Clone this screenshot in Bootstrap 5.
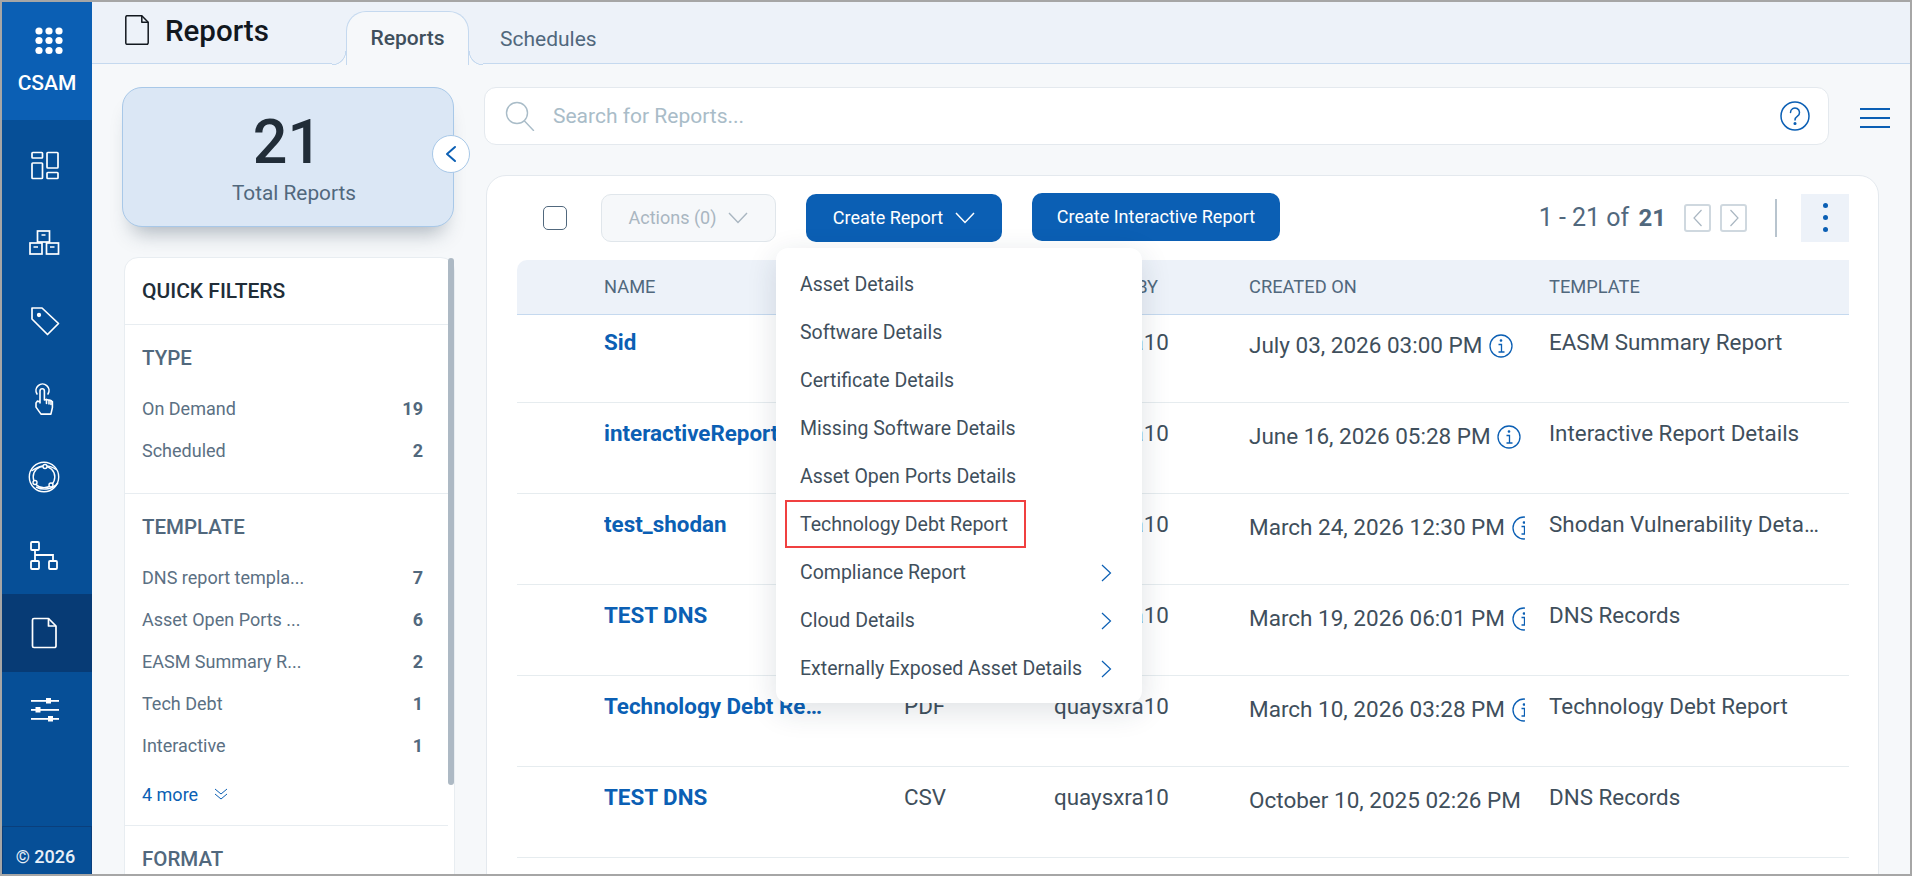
<!DOCTYPE html>
<html lang="en">
<head>
  <meta charset="UTF-8">
  <title>Reports</title>
  <link href="https://cdn.jsdelivr.net/npm/bootstrap@5.3.3/dist/css/bootstrap.min.css" rel="stylesheet">
  <style>
    html, body { height: 876px; overflow: hidden; }
    body { font-family: Roboto, "Liberation Sans", sans-serif; background: #f6f8fa; color: #3f4f5c; }
    .app-frame { height: 876px; border: 2px solid #a6a6a6; overflow: hidden; }
    .work-area { min-width: 0; }
    .work-body { min-height: 0; }

    .side-rail { width: 90px; flex: none; background: #064f97; }
    .rail-logo { height: 118px; background: #0b5fb4; color: #fff; font-size: 21px; font-weight: 500; padding-top: 66px; text-align: center; position: relative; }
    .rail-logo svg { position: absolute; left: 0; top: 0; }
    .rail-list { padding-top: 6px; }
    .rail-item { height: 78px; }
    .rail-item svg { display: block; }
    .rail-item.is-active { background: #073b75; }
    .rail-foot { height: 48px; border: 1px solid #0a3f7c; border-bottom: 0; color: #e8f0f8; font-size: 18px; font-weight: 500; text-align: center; line-height: 24px; padding: 18px 3px 0 0; }

    .top-bar { height: 62px; background: #edf2f9; border-bottom: 1px solid #c5d9ef; flex: none; padding-left: 33px; }
    .page-title { font-size: 29.5px; font-weight: 500; color: #12181f; line-height: 1; margin: 0 0 0 16px; }
    .title-head { height: 46px; width: 221px; margin-top: 7px; }
    .title-head svg { position: relative; top: -2px; }
    .tab-on { width: 123px; height: 54px; margin-top: 9px; background: #f6f8fa; border: 1px solid #c5d9ef; border-bottom: 0; border-radius: 20px 20px 0 0; font-size: 21px; font-weight: 500; color: #3f4f5c; position: relative; text-align: center; line-height: 52px; }
    .tab-on::before, .tab-on::after { content: ""; position: absolute; bottom: 0; width: 14px; height: 14px; }
    .tab-on::before { left: -15px; background: radial-gradient(circle at 0 0, #edf2f9 13px, #c5d9ef 13.5px, #c5d9ef 14px, #f6f8fa 14.5px); }
    .tab-on::after { right: -15px; background: radial-gradient(circle at 100% 0, #edf2f9 13px, #c5d9ef 13.5px, #c5d9ef 14px, #f6f8fa 14.5px); }
    .tab-off { font-size: 21px; color: #51687d; margin-left: 31px; padding-top: 18px; line-height: 38px; }

    .left-col { width: 392px; flex: none; padding: 23px 0 0 30px; }
    .stat-box { width: 332px; height: 140px; background: #dbe7f5; border: 1px solid #a8c8e8; border-radius: 20px; box-shadow: 0 16px 20px -10px rgba(40, 60, 80, .35); text-align: center; position: relative; padding-top: 19px; }
    .stat-num { font-size: 61px; font-weight: 500; color: #212d38; line-height: 70px; margin-left: -1px; }
    .stat-label { font-size: 20.800px; color: #51687d; line-height: 24px; margin-top: 4px; margin-left: 12px; }
    .stat-toggle { position: absolute; right: -17px; top: 47px; width: 38px; height: 38px; border-radius: 50%; background: #fff; border: 1px solid #a8c8e8; display: flex; align-items: center; justify-content: center; }

    .filter-panel { width: 331px; margin: 30px 0 0 2px; background: #fff; border: 1px solid #e8edf1; border-radius: 14px 14px 0 0; height: 640px; position: relative; padding-right: 6px; }
    .panel-scroll { position: absolute; right: 0; top: 0; width: 6px; height: 527px; background: #adb9c4; border-radius: 3px; }
    .panel-head { height: 67px; padding-left: 17px; line-height: 66px; font-size: 21px; font-weight: 500; color: #212d38; border-bottom: 1px solid #e8edf1; }
    .filter-group { padding: 21px 25px 0 17px; border-bottom: 1px solid #e8edf1; }
    .group-type { height: 169px; }
    .group-template { height: 332px; }
    .group-title { font-size: 20.500px; font-weight: 500; color: #51687d; line-height: 24px; margin-bottom: 17px; }
    .filter-line { height: 42px; font-size: 18px; color: #5b7083; }
    .filter-line b { font-weight: 700; color: #51687d; }
    .more-link { color: #0b5fb4; font-size: 18px; height: 42px; margin-top: 7px; }

    .right-col { flex: 1; padding-top: 23px; min-width: 0; }
    .search-bar { width: 1345px; height: 58px; background: #fff; border: 1px solid #e4e9ee; border-radius: 12px; padding: 0 18px 0 20px; }
    .search-hint { font-size: 21px; color: #a9bcc8; margin: 2px 0 0 17px; }
    .burger-btn { width: 30px; margin: 3px 0 0 31px; }
    .burger-btn span { display: block; height: 2px; background: #0b5fb4; margin-bottom: 7px; }

    .main-card { width: 1393px; height: 720px; margin: 30px 0 0 2px; background: #fff; border: 1px solid #e4e9ee; border-radius: 20px 20px 0 0; padding: 17px 29px 0 30px; }
    .tool-row { height: 49px; margin-bottom: 18px; }
    .tick-box { width: 24px; height: 24px; border: 1.5px solid #51687d; border-radius: 5px; margin-left: 26px; background: #fff; }
    .act-btn { width: 175px; height: 48px; margin-left: 34px; background: #f6f8fa; border: 1px solid #e0e6eb; border-radius: 10px; color: #a9b6c1; font-size: 18px; gap: 12px; }
    .blue-btn { height: 48px; background: #0b5fb4; border: 0; border-radius: 10px; color: #fff; font-size: 18px; font-weight: 400; }
    .blue-btn:hover { background: #0b5fb4; color: #fff; }
    .create-wrap { margin-left: 30px; position: relative; }
    .create-btn { width: 196px; gap: 12px; }
    .inter-btn { width: 248px; margin-left: 30px; position: relative; top: -1px; padding: 0; }
    .page-count { font-size: 25px; color: #51687d; margin-left: auto; }
    .page-count b { font-weight: 700; margin-left: 3px; font-size: 24px; }
    .page-arrow { width: 27px; height: 28px; border: 2px solid #cfd8df; border-radius: 3px; background: #fff; margin-left: 9px; }
    .page-arrow.first-arrow { margin-left: 18px; }
    .tool-split { width: 2px; height: 38px; background: #b8c4ce; margin: 0 24px 0 28px; }
    .kebab-box { width: 48px; height: 48px; background: #edf2f9; gap: 7px; }
    .kebab-box i { display: block; width: 5px; height: 5px; border-radius: 50%; background: #0b5fb4; }

    .create-menu { left: -30px; top: 54px; width: 366px; height: 455px; padding: 13px 0 0; border: 0; border-radius: 12px; box-shadow: 0 8px 30px rgba(30, 50, 70, .14); z-index: 5; }
    .create-menu .dropdown-item { height: 48px; line-height: 48px; padding: 0 24px; font-size: 19.500px; color: #3f4f5c; position: relative; display: flex; align-items: center; justify-content: space-between; }
    .mark-red::after { content: ""; position: absolute; left: 9px; top: -1px; width: 241px; height: 48px; border: 2px solid #f04040; }
    .item-go { margin-right: 6px; }

    .report-grid { table-layout: fixed; width: 1332px; margin: 0; --bs-border-color: #e6ecef; }
    .report-grid thead th { height: 54px; background: #edf2f9; border-bottom: 1px solid #c5d9ef; font-size: 18.300px; font-weight: 400; color: #51687d; padding: 0; vertical-align: middle; }
    .report-grid thead th:first-child { border-top-left-radius: 10px; }
    .report-grid td { height: 91px; padding: 18px 0 0; font-size: 22.400px; color: #3f4f5c; vertical-align: top; line-height: 24px; }
    .report-grid tbody tr:first-child td { height: 88px; padding-top: 15px; }
    .col-check { width: 87px; }
    .col-name { width: 300px; }
    .col-format { width: 150px; }
    .col-by { width: 195px; }
    .col-on { width: 300px; }
    .col-tmpl { width: 300px; }
    .report-grid .name-cell { color: #0b5fb4; font-weight: 700; width: 222px; }
    .date-cell { width: 276px; overflow: hidden; white-space: nowrap; padding-top: 3px; height: 30px; font-size: 22.500px; }
    .date-cell svg { vertical-align: -5px; margin-left: 1px; }
    .tmpl-cell { width: 272px; }
  </style>
</head>
<body>

<div class="app-frame d-flex">
  <nav class="side-rail d-flex flex-column">
    <div class="rail-logo">
      <svg width="90" height="60" viewBox="2 2 90 60" fill="#fff">
        <circle cx="39" cy="31" r="3.6"/><circle cx="49" cy="31" r="3.6"/><circle cx="59" cy="31" r="3.6"/>
        <circle cx="39" cy="40.5" r="3.6"/><circle cx="49" cy="40.5" r="3.6"/><circle cx="59" cy="40.5" r="3.6"/>
        <circle cx="39" cy="50.5" r="3.6"/><circle cx="49" cy="50.5" r="3.6"/><circle cx="59" cy="50.5" r="3.6"/>
      </svg>
      CSAM
    </div>
    <div class="rail-list flex-grow-1">
      <div class="rail-item">
        <svg width="90" height="78" viewBox="2 126 90 78" fill="none" stroke="#fff" stroke-width="1.7">
          <rect x="32" y="152.5" width="10.5" height="5.5" rx=".8"/><rect x="32" y="163" width="10.5" height="15.5" rx=".8"/>
          <rect x="47" y="152.5" width="11" height="15.5" rx=".8"/><rect x="47" y="172.5" width="11" height="6" rx=".8"/>
        </svg>
      </div>
      <div class="rail-item">
        <svg width="90" height="78" viewBox="2 204 90 78" fill="none" stroke="#fff" stroke-width="1.7">
          <rect x="37.5" y="231" width="12" height="11"/><rect x="30" y="243" width="12" height="11"/><rect x="46.5" y="243" width="12" height="11"/>
          <path d="M41.5 235h4M33.500 247h4.500M50 247h4.500"/>
        </svg>
      </div>
      <div class="rail-item">
        <svg width="90" height="78" viewBox="2 282 90 78" fill="none" stroke="#fff" stroke-width="1.7" stroke-linejoin="round">
          <path d="M32 308h10l16.500 15.500-11 11L32 319z"/><circle cx="39" cy="315" r="1.300" fill="#fff"/>
        </svg>
      </div>
      <div class="rail-item">
        <svg width="90" height="78" viewBox="2 360 90 78" fill="none" stroke="#fff" stroke-width="1.600" stroke-linecap="round" stroke-linejoin="round">
          <path d="M37 394a6.500 6.500 0 1 1 11 0"/>
          <path d="M40 403v-12a2.200 2.200 0 0 1 4.400 0v9l2 -.6 2 .6 2 .4 2 1.200v6l-1.500 6.500H41l-5-7v-4l1.500-2 2.500 1"/>
          <path d="M46.500 399.500v4M49 400v4M51 400.500v4"/>
        </svg>
      </div>
      <div class="rail-item">
        <svg width="90" height="78" viewBox="2 438 90 78" fill="none" stroke="#fff" stroke-width="1.400">
          <circle cx="44" cy="477" r="14.700"/>
          <circle cx="44" cy="477" r="10.800"/>
          <path d="M31.500 471c7-5.500 17-7.500 24.500-1.500M58 483c-5 6-14 8-22 4"/>
          <circle cx="45" cy="466.500" r="2" fill="#064f97"/><circle cx="35" cy="482.500" r="2" fill="#064f97"/><circle cx="51" cy="485" r="2" fill="#064f97"/>
        </svg>
      </div>
      <div class="rail-item">
        <svg width="90" height="78" viewBox="2 516 90 78" fill="none" stroke="#fff" stroke-width="1.800">
          <rect x="31" y="542" width="8" height="8" rx="1"/><rect x="31" y="561" width="8" height="8" rx="1"/><rect x="49" y="561" width="8" height="8" rx="1"/>
          <path d="M35 550v11M35 555h18v6"/>
        </svg>
      </div>
      <div class="rail-item is-active">
        <svg width="90" height="78" viewBox="2 594 90 78" fill="none" stroke="#fff" stroke-width="1.700" stroke-linejoin="round">
          <path d="M34 618.500h14.500l7.500 7.500v20a1.500 1.500 0 0 1-1.500 1.500H34a1.500 1.500 0 0 1-1.500-1.500v-26a1.500 1.500 0 0 1 1.500-1.500z"/>
          <path d="M48.500 618.500v7.500h7.500"/>
        </svg>
      </div>
      <div class="rail-item">
        <svg width="90" height="78" viewBox="2 672 90 78" fill="#fff">
          <rect x="31" y="700" width="28" height="1.800"/><rect x="31" y="709" width="28" height="1.800"/><rect x="31" y="718" width="28" height="1.800"/>
          <rect x="46" y="698" width="5" height="5.500"/><rect x="35.500" y="707" width="5" height="5.500"/><rect x="48" y="716" width="5" height="5.500"/>
        </svg>
      </div>
    </div>
    <div class="rail-foot">© 2026</div>
  </nav>

  <div class="work-area flex-grow-1 d-flex flex-column">
    <header class="top-bar d-flex">
      <div class="title-head d-flex align-items-center">
        <svg width="24" height="30" viewBox="0 0 24 30" fill="none" stroke="#12181f" stroke-width="1.500" stroke-linejoin="round">
          <path d="M1.800 .8h15l6.400 6.400v20.600a1.500 1.500 0 0 1-1.500 1.500H1.800a1.500 1.500 0 0 1-1-1.500V2.300a1.500 1.500 0 0 1 1-1.500z"/>
          <path d="M16.800 .8v6.400h6.400"/>
        </svg>
        <h1 class="page-title">Reports</h1>
      </div>
      <div class="tab-on">Reports</div>
      <div class="tab-off">Schedules</div>
    </header>

    <div class="work-body d-flex flex-grow-1">
      <aside class="left-col">
        <div class="stat-box">
          <div class="stat-num">21</div>
          <div class="stat-label">Total Reports</div>
          <div class="stat-toggle">
            <svg width="12" height="18" viewBox="0 0 12 18" fill="none" stroke="#0b5fb4" stroke-width="2" stroke-linecap="round" stroke-linejoin="round"><path d="M10 2 2 9l8 7"/></svg>
          </div>
        </div>

        <div class="filter-panel">
          <div class="panel-scroll"></div>
          <div class="panel-head">QUICK FILTERS</div>
          <div class="filter-group group-type">
            <div class="group-title">TYPE</div>
            <div class="filter-line d-flex justify-content-between align-items-center"><span>On Demand</span><b>19</b></div>
            <div class="filter-line d-flex justify-content-between align-items-center"><span>Scheduled</span><b>2</b></div>
          </div>
          <div class="filter-group group-template">
            <div class="group-title">TEMPLATE</div>
            <div class="filter-line d-flex justify-content-between align-items-center"><span>DNS report templa...</span><b>7</b></div>
            <div class="filter-line d-flex justify-content-between align-items-center"><span>Asset Open Ports ...</span><b>6</b></div>
            <div class="filter-line d-flex justify-content-between align-items-center"><span>EASM Summary R...</span><b>2</b></div>
            <div class="filter-line d-flex justify-content-between align-items-center"><span>Tech Debt</span><b>1</b></div>
            <div class="filter-line d-flex justify-content-between align-items-center"><span>Interactive</span><b>1</b></div>
            <div class="more-link d-flex align-items-center gap-3">
              <span>4 more</span>
              <svg width="14" height="12" viewBox="0 0 14 12" fill="none" stroke="#0b5fb4" stroke-width="1"><path d="m1 1 6 5 6-5M1 6l6 5 6-5"/></svg>
            </div>
          </div>
          <div class="filter-group border-0">
            <div class="group-title">FORMAT</div>
          </div>
        </div>
      </aside>

      <main class="right-col">
        <div class="d-flex align-items-center">
          <div class="search-bar d-flex align-items-center">
            <svg width="31" height="30" viewBox="0 0 31 30" fill="none" stroke="#a9bcc8" stroke-width="1.400" stroke-linecap="round"><circle cx="12" cy="12" r="10.500"/><path d="m19.500 20 9 9.500"/></svg>
            <span class="search-hint">Search for Reports...</span>
            <svg class="ms-auto" width="30" height="30" viewBox="0 0 30 30" fill="none" stroke="#0b5fb4" stroke-width="1.500" stroke-linecap="round">
              <circle cx="15" cy="15" r="14"/><path d="M10.500 11.500a4.500 4.500 0 1 1 7 3.700c-1.600 1.100-2.500 2-2.500 3.800"/><circle cx="15" cy="22.500" r=".8" fill="#0b5fb4"/>
            </svg>
          </div>
          <div class="burger-btn"><span></span><span></span><span class="mb-0"></span></div>
        </div>

        <section class="main-card">
          <div class="tool-row d-flex align-items-center">
            <div class="tick-box"></div>
            <button type="button" class="btn act-btn d-flex align-items-center justify-content-center">
              Actions (0)
              <svg width="20" height="12" viewBox="0 0 20 12" fill="none" stroke="#a9b6c1" stroke-width="1.400"><path d="m1 1 9 9.500L19 1"/></svg>
            </button>
            <div class="create-wrap">
              <button type="button" class="btn blue-btn create-btn d-flex align-items-center justify-content-center">
                Create Report
                <svg width="20" height="12" viewBox="0 0 20 12" fill="none" stroke="#fff" stroke-width="1.500"><path d="m1 1 9 9.500L19 1"/></svg>
              </button>
              <div class="dropdown-menu show create-menu">
                <a class="dropdown-item" href="#">Asset Details</a>
                <a class="dropdown-item" href="#">Software Details</a>
                <a class="dropdown-item" href="#">Certificate Details</a>
                <a class="dropdown-item" href="#">Missing Software Details</a>
                <a class="dropdown-item" href="#">Asset Open Ports Details</a>
                <a class="dropdown-item mark-red" href="#">Technology Debt Report</a>
                <a class="dropdown-item" href="#">Compliance Report
                  <svg class="item-go" width="11" height="18" viewBox="0 0 11 18" fill="none" stroke="#0b5fb4" stroke-width="1.200"><path d="m1 1 8.500 8L1 17"/></svg></a>
                <a class="dropdown-item" href="#">Cloud Details
                  <svg class="item-go" width="11" height="18" viewBox="0 0 11 18" fill="none" stroke="#0b5fb4" stroke-width="1.200"><path d="m1 1 8.500 8L1 17"/></svg></a>
                <a class="dropdown-item" href="#">Externally Exposed Asset Details
                  <svg class="item-go" width="11" height="18" viewBox="0 0 11 18" fill="none" stroke="#0b5fb4" stroke-width="1.200"><path d="m1 1 8.500 8L1 17"/></svg></a>
              </div>
            </div>
            <button type="button" class="btn blue-btn inter-btn">Create Interactive Report</button>
            <div class="page-count">1 - 21 of <b>21</b></div>
            <div class="page-arrow first-arrow d-flex align-items-center justify-content-center">
              <svg width="10" height="18" viewBox="0 0 10 18" fill="none" stroke="#a9b6c1" stroke-width="1.200"><path d="M8.500 1 1 9l7.500 8"/></svg>
            </div>
            <div class="page-arrow d-flex align-items-center justify-content-center">
              <svg width="10" height="18" viewBox="0 0 10 18" fill="none" stroke="#a9b6c1" stroke-width="1.200"><path d="m1.500 1 7.500 8-7.500 8"/></svg>
            </div>
            <div class="tool-split"></div>
            <div class="kebab-box d-flex flex-column align-items-center justify-content-center"><i></i><i></i><i></i></div>
          </div>

          <table class="table report-grid">
            <colgroup><col class="col-check"><col class="col-name"><col class="col-format"><col class="col-by"><col class="col-on"><col class="col-tmpl"></colgroup>
            <thead>
              <tr><th></th><th>NAME</th><th>FORMAT</th><th>CREATED BY</th><th>CREATED ON</th><th>TEMPLATE</th></tr>
            </thead>
            <tbody id="report-rows"></tbody>
          </table>
        </section>
      </main>
    </div>
  </div>
</div>

<script src="https://cdn.jsdelivr.net/npm/bootstrap@5.3.3/dist/js/bootstrap.bundle.min.js"></script>
<script>
  const infoIcon = `<svg width="24" height="24" viewBox="0 0 24 24" fill="none" stroke="#0b5fb4" stroke-width="1.300"><circle cx="12" cy="12" r="11"/><path d="M9.500 10.500H12.500V18M9.500 18h6"/><circle cx="12" cy="6.500" r=".7" fill="#0b5fb4"/></svg>`;
  const reports = [
    ['Sid', 'PDF', 'July 03, 2026 03:00 PM', true, 'EASM Summary Report'],
    ['interactiveReport', 'PDF', 'June 16, 2026 05:28 PM', true, 'Interactive Report Details'],
    ['test_shodan', 'CSV', 'March 24, 2026 12:30 PM', true, 'Shodan Vulnerability Details Report'],
    ['TEST DNS', 'CSV', 'March 19, 2026 06:01 PM', true, 'DNS Records'],
    ['Technology Debt Report', 'PDF', 'March 10, 2026 03:28 PM', true, 'Technology Debt Report'],
    ['TEST DNS', 'CSV', 'October 10, 2025 02:26 PM', false, 'DNS Records']
  ];
  document.getElementById('report-rows').innerHTML = reports.map(r => `
    <tr>
      <td></td>
      <td><div class="name-cell text-truncate">${r[0]}</div></td>
      <td>${r[1]}</td>
      <td>quaysxra10</td>
      <td><div class="date-cell">${r[2]} ${r[3] ? infoIcon : ''}</div></td>
      <td><div class="tmpl-cell text-truncate">${r[4]}</div></td>
    </tr>`).join('');
</script>
</body>
</html>
